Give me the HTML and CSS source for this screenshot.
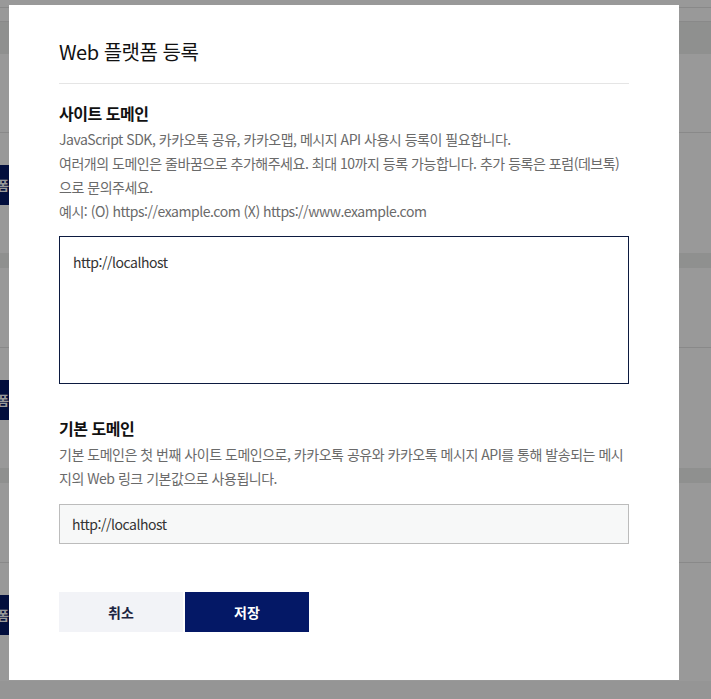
FILE: index.html
```html
<!DOCTYPE html>
<html lang="ko">
<head>
<meta charset="utf-8">
<title>Web 플랫폼 등록</title>
<link rel="stylesheet" href="styles.css">
</head>
<body>
<div class="page">
  <div class="top-a"></div>
  <div class="top-b"></div>
  <div class="thead"></div>
  <div class="row-first"></div>
  <div class="row"><div class="navbtn">플랫폼</div><div class="band"></div></div>
  <div class="row"><div class="navbtn">플랫폼</div><div class="band"></div></div>
  <div class="row row-last"><div class="navbtn">플랫폼</div></div>
</div>
<div class="overlay"></div>
<div class="modal">
  <h1 class="modal-title">Web 플랫폼 등록</h1>
  <section class="field">
    <h2 class="field-title">사이트 도메인</h2>
    <p class="desc">JavaScript SDK, 카카오톡 공유, 카카오맵, 메시지 API 사용시 등록이 필요합니다.<br>여러개의 도메인은 줄바꿈으로 추가해주세요. 최대 10까지 등록 가능합니다. 추가 등록은 포럼(데브톡)으로 문의주세요.<br>예시: (O) https://example.com (X) https://www.example.com</p>
    <div class="textarea">http://localhost</div>
  </section>
  <section class="field field-2">
    <h2 class="field-title">기본 도메인</h2>
    <p class="desc">기본 도메인은 첫 번째 사이트 도메인으로, 카카오톡 공유와 카카오톡 메시지 API를 통해 발송되는 메시지의 Web 링크 기본값으로 사용됩니다.</p>
    <div class="input">http://localhost</div>
  </section>
  <div class="actions">
    <button class="btn btn-cancel">취소</button>
    <button class="btn btn-save">저장</button>
  </div>
</div>
</body>
</html>
```
FILE: styles.css
```css
* { box-sizing: border-box; }
html, body { margin: 0; padding: 0; }
body {
  font-family: "Noto Sans CJK KR", "Noto Sans", sans-serif;
  background: #f8f8f8;
  width: 711px;
  height: 699px;
  overflow: hidden;
}
.page { background: #fff; width: 711px; }
.top-a { height: 8px; border-bottom: 1px solid #e4e4e4; }
.top-b { height: 14px; border-bottom: 1px solid #e4e4e4; }
.thead { height: 32px; background: #eef1ef; }
.row-first { height: 79px; border-bottom: 1px solid #e4e4e4; }
.row {
  height: 215px;
  border-bottom: 1px solid #e4e4e4;
  display: flex;
  flex-direction: column;
}
.row-last { height: 118px; border-bottom: none; }
.navbtn {
  margin-top: 32px;
  width: 9px;
  height: 40px;
  overflow: hidden;
  background: #041866;
  color: #fff;
  font-size: 13px;
  font-weight: 700;
  line-height: 40px;
  white-space: nowrap;
  direction: rtl;
  text-align: right;
}
.band { margin-top: 48px; height: 15px; background: #eef1ef; }

.overlay {
  position: fixed;
  inset: 0;
  background: rgba(0, 0, 0, 0.4);
}
.modal {
  position: absolute;
  left: 9px;
  top: 5px;
  width: 670px;
  height: 675px;
  background: #fff;
  padding: 33px 50px 48px;
  letter-spacing: -0.03em;
}
.modal-title {
  margin: 0;
  font-size: 20px;
  line-height: 28px;
  font-weight: 400;
  color: #111;
  padding-bottom: 17px;
  border-bottom: 1px solid #e5e5e5;
}
.field { margin-top: 17px; }
.field-2 { margin-top: 32px; }
.field-title {
  margin: 0 0 2px;
  font-size: 16px;
  line-height: 24px;
  font-weight: 700;
  color: #111;
}
.desc {
  margin: 0;
  font-size: 14px;
  line-height: 24px;
  color: #6a6a6a;
  word-break: break-all;
}
.textarea {
  margin-top: 13px;
  height: 148px;
  border: 1px solid #0c1a40;
  padding: 13px 13px;
  font-size: 14px;
  line-height: 24px;
  color: #333;
}
.input {
  margin-top: 14px;
  height: 40px;
  border: 1px solid #bcbcbc;
  background: #f7f8f8;
  padding: 0 12px;
  font-size: 14px;
  line-height: 38px;
  color: #333;
}
.actions {
  margin-top: 48px;
  display: flex;
  gap: 2px;
}
.btn {
  width: 124px;
  height: 40px;
  border: none;
  font-family: inherit;
  font-size: 14px;
  font-weight: 700;
  letter-spacing: 0;
  padding: 0;
}
.btn-cancel { background: #f2f3f7; color: #1c2340; }
.btn-save { background: #041866; color: #fff; }
```
